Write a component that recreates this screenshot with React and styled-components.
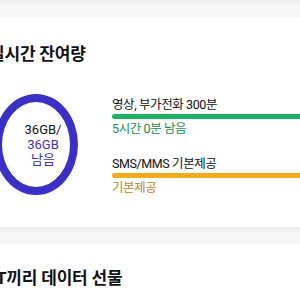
import React from 'react';
import styled, {createGlobalStyle} from 'styled-components';

const GlobalStyle = createGlobalStyle`
  html, body {
    margin: 0;
    padding: 0;
    background: #fff;
  }
  body {
    font-family: Roboto, "Noto Sans CJK KR", sans-serif;
    color: #111;
  }
`;

const Page = styled.div`
  width: 300px;
  height: 300px;
  overflow: hidden;
  background: #fff;
`;

const Divider = styled.div`
  height: ${props => props.size}px;
  background: linear-gradient(#eeeeee, #f5f5f5 40%, #f7f7f7);
`;

const Card = styled.section`
  width: 340px;
  margin-left: ${props => props.shift}px;
  padding: ${props => props.top}px 0 ${props => props.bottom}px;
`;

const Title = styled.h2`
  margin: 0;
  font-size: 17px;
  line-height: 24px;
  font-weight: 700;
  letter-spacing: -0.2px;
  color: #111;
`;

const Usage = styled.div`
  display: grid;
  grid-template-columns: 84px 1fr;
  column-gap: 34px;
  align-items: start;
  margin: 28px 0 0 5px;
`;

const Ring = styled.div`
  box-sizing: border-box;
  width: 84px;
  height: 101px;
  border: 8px solid #3b30c6;
  border-radius: 50%;
  display: flex;
  flex-direction: column;
  align-items: center;
  justify-content: center;
  padding-left: 14px;
  font-size: 13px;
  line-height: 15px;
`;

const RingLine = styled.span`
  color: ${props => props.accent ? '#3b30b8' : '#111'};
`;

const List = styled.div`
  display: flex;
  flex-direction: column;
  gap: 17px;
  padding-top: 2px;
`;

const Item = styled.div`
  display: flex;
  flex-direction: column;
`;

const Label = styled.div`
  font-size: 12.5px;
  line-height: 18px;
  color: ${props => props.color || '#111'};
  letter-spacing: -0.4px;
`;

const Bar = styled.div`
  height: 5px;
  margin: 0 0 1px;
  border-radius: 3px;
  background: ${props => props.color};
`;

const App = () => (
  <Page>
    <GlobalStyle/>
    <Divider size={17}/>
    <Card shift={-11} top={25} bottom={30}>
      <Title>실시간 잔여량</Title>
      <Usage>
        <Ring>
          <RingLine>36GB/</RingLine>
          <RingLine accent>36GB</RingLine>
          <RingLine accent>남음</RingLine>
        </Ring>
        <List>
          <Item>
            <Label>영상, 부가전화 300분</Label>
            <Bar color="#1db063"/>
            <Label color="#1a8c52">5시간 0분 남음</Label>
          </Item>
          <Item>
            <Label>SMS/MMS 기본제공</Label>
            <Bar color="#f5ab1c"/>
            <Label color="#c27f10">기본제공</Label>
          </Item>
        </List>
      </Usage>
    </Card>
    <Divider size={17}/>
    <Card shift={-4} top={22} bottom={0}>
      <Title>T끼리 데이터 선물</Title>
    </Card>
  </Page>
);

export default App;
